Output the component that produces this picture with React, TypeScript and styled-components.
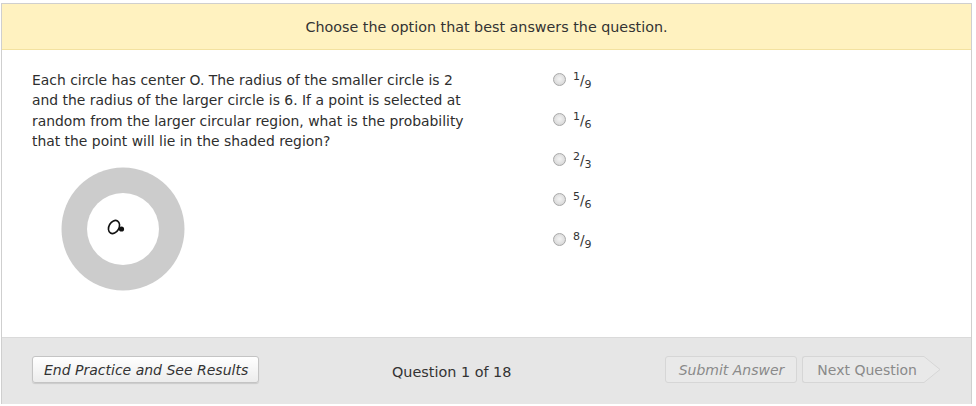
import React from "react";
import styled, { createGlobalStyle } from "styled-components";

const Global = createGlobalStyle`
  html, body { margin: 0; padding: 0; background: #ffffff; }
  body { font-family: "DejaVu Sans", Verdana, sans-serif; color: #333; }
`;

const Page = styled.div`
  padding: 3px 0 0 1px;
  width: 976px;
  height: 406px;
  box-sizing: border-box;
`;

const Frame = styled.div`
  width: 971px;
  height: 401px;
  box-sizing: border-box;
  border: 1px solid #cfcfcf;
  border-bottom: none;
  display: flex;
  flex-direction: column;
`;

const Header = styled.div`
  height: 45px;
  background: #fff2c0;
  border-bottom: 1px solid #f3e2a0;
  display: flex;
  align-items: center;
  justify-content: center;
  font-size: 14.3px;
  color: #333;
`;

const Body = styled.div`
  flex: 1;
  display: flex;
  background: #fff;
`;

const QuestionCol = styled.div`
  width: 440px;
  padding: 20px 0 0 30px;
`;

const QuestionText = styled.p`
  margin: 0;
  font-size: 13.9px;
  line-height: 20.3px;
  color: #2e2e2e;
`;

const Figure = styled.div`
  margin: 16px 0 0 29px;
  width: 124px;
  height: 124px;
`;

const OptionsCol = styled.div`
  padding: 20px 0 0 81px;
  display: flex;
  flex-direction: column;
  gap: 20px;
`;

const Option = styled.label`
  display: flex;
  align-items: center;
  height: 20px;
  font-size: 13px;
  color: #333;
`;

const Radio = styled.span`
  width: 11px;
  height: 11px;
  border-radius: 50%;
  border: 1px solid #a8a8a8;
  background: radial-gradient(circle at 50% 45%, #f4f4f4 0%, #dedede 60%, #c9c9c9 100%);
  margin-right: 7px;
  margin-top: -1px;
`;

const Frac = styled.span`
  display: inline-flex;
  align-items: baseline;
  font-size: 13.5px;
`;

const Sup = styled.span`
  font-size: 11px;
  position: relative;
  top: -5px;
`;

const Sub = styled.span`
  font-size: 11px;
  position: relative;
  top: 3px;
`;

const Footer = styled.div`
  height: 67px;
  background: #e6e6e6;
  border-top: 1px solid #dadada;
  display: flex;
  align-items: flex-start;
  padding: 18px 0 0 30px;
  box-sizing: border-box;
  position: relative;
`;

const Button = styled.button<{ $disabled?: boolean; $italic?: boolean }>`
  font-family: "DejaVu Sans", Verdana, sans-serif;
  font-size: 14px;
  font-style: ${(p) => (p.$italic ? "italic" : "normal")};
  height: 27px;
  padding: 0 10px 0 11px;
  border-radius: 3px;
  border: 1px solid ${(p) => (p.$disabled ? "#d6d6d6" : "#c4c4c4")};
  background: ${(p) =>
    p.$disabled ? "#e9e9e9" : "linear-gradient(#ffffff, #ececec)"};
  color: ${(p) => (p.$disabled ? "#8a8a8a" : "#333")};
  box-shadow: ${(p) => (p.$disabled ? "none" : "0 1px 1px rgba(0,0,0,0.12)")};
  cursor: default;
`;

const SubmitBtn = styled(Button)`
  padding: 0 12px 0 13px;
`;

const Counter = styled.div`
  position: absolute;
  left: 390px;
  top: 26px;
  font-size: 14.4px;
  color: #333;
`;

const RightGroup = styled.div`
  margin-left: auto;
  margin-right: 30px;
  display: flex;
  gap: 5px;
  align-items: center;
`;

const NextWrap = styled.div`
  position: relative;
  height: 27px;
  display: flex;
`;

const NextBtn = styled(Button)`
  border-right: none;
  border-radius: 3px 0 0 3px;
  padding: 0 6px 0 14px;
`;

const Arrow = styled.svg`
  display: block;
`;

function Fraction({ n, d }: { n: string; d: string }) {
  return (
    <Frac>
      <Sup>{n}</Sup>/<Sub>{d}</Sub>
    </Frac>
  );
}

const options = [
  ["1", "9"],
  ["1", "6"],
  ["2", "3"],
  ["5", "6"],
  ["8", "9"],
];

export default function App() {
  return (
    <Page>
      <Global />
      <Frame>
        <Header>Choose the option that best answers the question.</Header>
        <Body>
          <QuestionCol>
            <QuestionText>
              Each circle has center O. The radius of the smaller circle is 2
              and the radius of the larger circle is 6. If a point is selected
              at random from the larger circular region, what is the
              probability that the point will lie in the shaded region?
            </QuestionText>
            <Figure>
              <svg width="124" height="124" viewBox="0 0 124 124">
                <circle cx="62" cy="62" r="61.5" fill="#cccccc" />
                <circle cx="62" cy="62" r="36" fill="#ffffff" />
                <ellipse
                  cx="53"
                  cy="60"
                  rx="5"
                  ry="7"
                  transform="rotate(30 53 60)"
                  fill="none"
                  stroke="#111"
                  strokeWidth="1.6"
                />
                <circle cx="60.5" cy="62" r="2.6" fill="#111" />
              </svg>
            </Figure>
          </QuestionCol>
          <OptionsCol>
            {options.map(([n, d], i) => (
              <Option key={i}>
                <Radio />
                <Fraction n={n} d={d} />
              </Option>
            ))}
          </OptionsCol>
        </Body>
        <Footer>
          <Button $italic>End Practice and See Results</Button>
          <Counter>Question 1 of 18</Counter>
          <RightGroup>
            <SubmitBtn $disabled $italic>
              Submit Answer
            </SubmitBtn>
            <NextWrap>
              <NextBtn $disabled>Next Question</NextBtn>
              <Arrow width="18" height="27" viewBox="0 0 18 27">
                <path
                  d="M0 0.5 H1 L17 13.5 L1 26.5 H0"
                  fill="#e9e9e9"
                  stroke="#d6d6d6"
                  strokeWidth="1"
                />
              </Arrow>
            </NextWrap>
          </RightGroup>
        </Footer>
      </Frame>
    </Page>
  );
}
